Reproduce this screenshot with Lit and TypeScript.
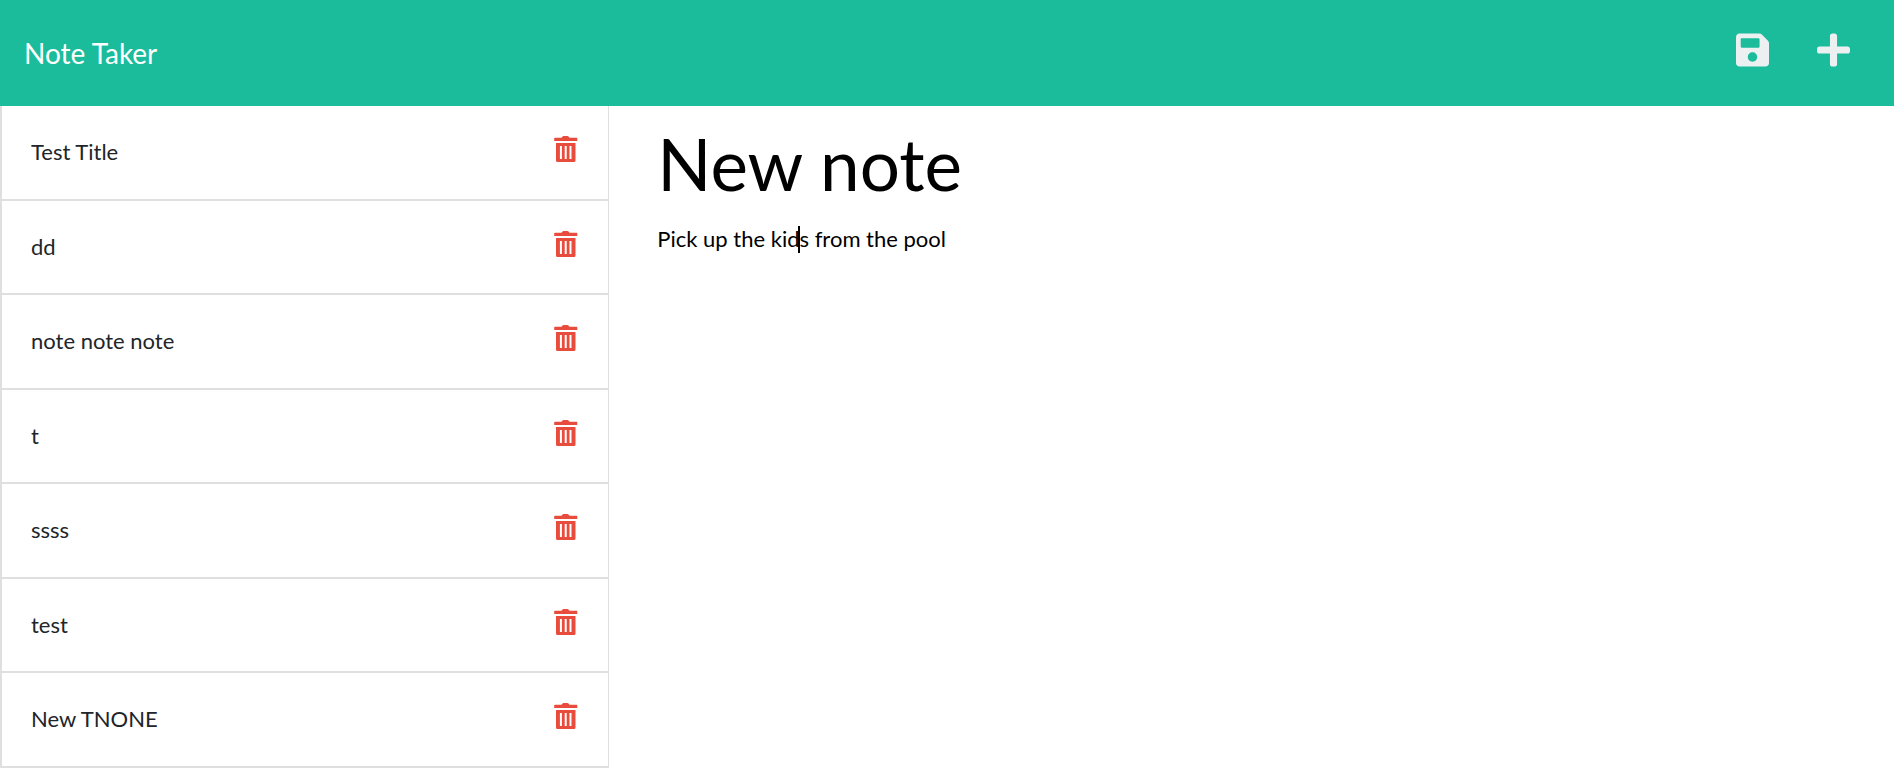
import { LitElement, html, css } from "lit";
import { customElement, state } from "lit/decorators.js";

interface Note {
  id: number;
  title: string;
}

@customElement("app-root")
export class AppRoot extends LitElement {
  static styles = css`
    :host {
      display: block;
      min-height: 100vh;
      background: #fff;
      color: #212529;
      font-family: Lato, "Liberation Sans", sans-serif;
      font-size: 22px;
      line-height: 1.66;
    }
    * {
      box-sizing: border-box;
    }
    .bar {
      display: flex;
      align-items: center;
      justify-content: space-between;
      height: 106px;
      padding: 0 44px 0 24px;
      background: #1abc9c;
    }
    .brand {
      color: #fff;
      font-size: 28px;
      text-decoration: none;
    }
    .actions {
      display: flex;
      gap: 48px;
      padding-bottom: 6px;
    }
    .icon-button {
      display: block;
      padding: 0;
      border: 0;
      background: none;
      color: #ecf0f1;
      cursor: pointer;
    }
    .icon-button svg {
      display: block;
      fill: currentColor;
    }
    .delete {
      color: #e74c3c;
      padding-bottom: 6px;
    }
    .layout {
      display: grid;
      grid-template-columns: 1fr 2fr;
    }
    .sidebar {
      padding-right: 22px;
    }
    .list {
      margin: 0;
      padding: 0;
      list-style: none;
      border-left: 2px solid #dfdfdf;
      border-right: 1px solid #dfdfdf;
    }
    .item {
      display: flex;
      align-items: center;
      justify-content: space-between;
      padding: 28px 30px 28px 29px;
      border-bottom: 2px solid #dfdfdf;
    }
    .editor {
      display: flex;
      flex-direction: column;
      gap: 16px;
      min-width: 0;
      padding: 12px 26px;
    }
    .title,
    .text {
      display: block;
      width: 100%;
      margin: 0;
      padding: 0;
      border: 0;
      outline: 0;
      background: none;
      color: #000;
      font-family: inherit;
      resize: none;
    }
    .title {
      height: 90px;
      font-size: 71px;
    }
    .body {
      position: relative;
    }
    .text {
      font-size: 22px;
      line-height: 30px;
      height: 480px;
    }
    .caret {
      position: absolute;
      top: 2px;
      left: 141px;
      width: 2px;
      height: 27px;
      background: #000;
    }
  `;

  @state() private notes: Note[] = [
    "Test Title",
    "dd",
    "note note note",
    "t",
    "ssss",
    "test",
    "New TNONE",
  ].map((title, id) => ({ id, title }));

  private remove(id: number) {
    this.notes = this.notes.filter((n) => n.id !== id);
  }

  render() {
    return html`
      <header class="bar">
        <a class="brand" href="#">Note Taker</a>
        <div class="actions">
          <button class="icon-button" aria-label="Save note">
            <svg width="33" height="38" viewBox="0 0 448 512">
              <path d="M433.941 129.941l-83.882-83.882A48 48 0 0 0 316.118 32H48C21.49 32 0 53.49 0 80v352c0 26.51 21.49 48 48 48h352c26.51 0 48-21.49 48-48V163.882a48 48 0 0 0-14.059-33.941zM224 416c-35.346 0-64-28.654-64-64 0-35.346 28.654-64 64-64s64 28.654 64 64c0 35.346-28.654 64-64 64zm96-304.52V212c0 6.627-5.373 12-12 12H76c-6.627 0-12-5.373-12-12V108c0-6.627 5.373-12 12-12h228.52c3.183 0 6.235 1.264 8.485 3.515l3.48 3.48A11.996 11.996 0 0 1 320 111.48z" />
            </svg>
          </button>
          <button class="icon-button" aria-label="New note">
            <svg width="33" height="38" viewBox="0 0 448 512">
              <path d="M416 208H272V64c0-17.67-14.33-32-32-32h-32c-17.67 0-32 14.33-32 32v144H32c-17.67 0-32 14.33-32 32v32c0 17.67 14.33 32 32 32h144v144c0 17.67 14.33 32 32 32h32c17.67 0 32-14.33 32-32V304h144c17.67 0 32-14.33 32-32v-32c0-17.67-14.33-32-32-32z" />
            </svg>
          </button>
        </div>
      </header>
      <div class="layout">
        <nav class="sidebar" aria-label="Notes">
          <ul class="list">
            ${this.notes.map(
              (note) => html`
                <li class="item">
                  <span>${note.title}</span>
                  <button
                    class="icon-button delete"
                    aria-label="Delete ${note.title}"
                    @click=${() => this.remove(note.id)}
                  >
                    <svg width="24" height="26" viewBox="0 0 24 26">
                      <path fill-rule="evenodd" d="M1 1.700h6.500l1-1.200q.4-.5 1-.5h4q.6 0 1 .5l1 1.200H22.500q.8 0 .8.800v2.500H.2V2.500q0-.8.8-.8zM2 7h19.500v17.500q0 1.500-1.500 1.500h-16.500q-1.500 0-1.500-1.500zM5.900 10v13h2V10zM10.700 10v13h2V10zM15.500 10v13h2V10z" />
                    </svg>
                  </button>
                </li>
              `
            )}
          </ul>
        </nav>
        <main class="editor">
          <input class="title" type="text" aria-label="Note title" .value=${"New note"} />
          <div class="body">
            <textarea class="text" aria-label="Note text" spellcheck="false" .value=${"Pick up the kids from the pool"}></textarea>
            <span class="caret"></span>
          </div>
        </main>
      </div>
    `;
  }
}
